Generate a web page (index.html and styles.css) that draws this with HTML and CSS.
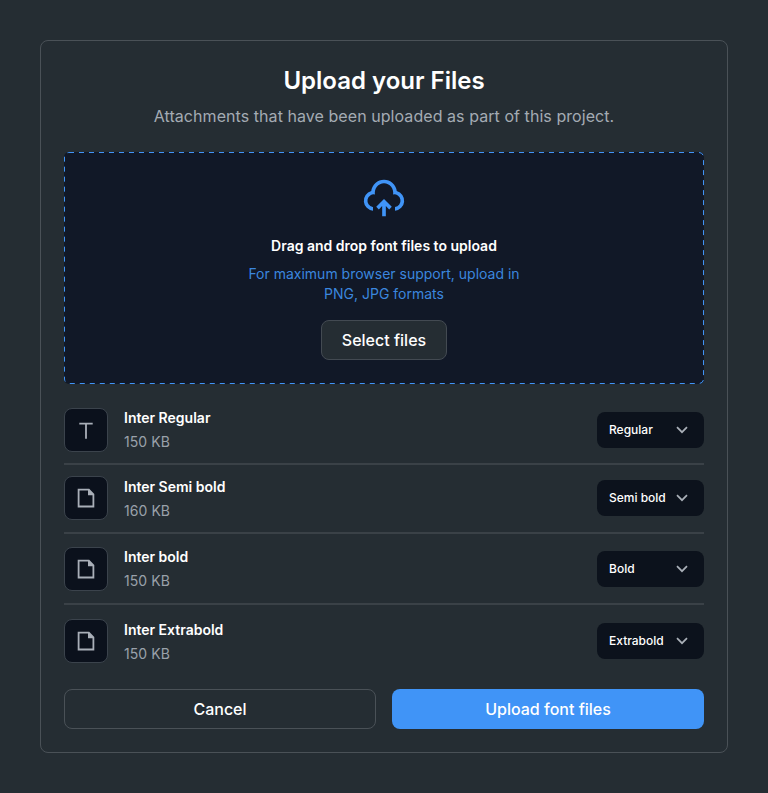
FILE: index.html
```html
<!DOCTYPE html>
<html lang="en">
<head>
<meta charset="utf-8">
<title>Upload your Files</title>
<link rel="stylesheet" href="styles.css">
</head>
<body>
<main class="card">
  <h1 class="title">Upload your Files</h1>
  <p class="subtitle">Attachments that have been uploaded as part of this project.</p>

  <section class="dropzone">
    <svg class="dropzone-outline" viewBox="0 0 640 232" aria-hidden="true"><rect x="0.5" y="0.5" width="639" height="231" rx="4.5"/></svg>
    <svg class="cloud" viewBox="0 0 24 24" aria-hidden="true"><path d="M12 12.586l4.243 4.242-1.415 1.415L13 16.415V22h-2v-5.587l-1.828 1.83-1.415-1.415L12 12.586zM12 2a7.001 7.001 0 0 1 6.954 6.194 5.5 5.5 0 0 1-.953 10.784v-2.014a3.5 3.5 0 1 0-1.112-6.91 5 5 0 1 0-9.777 0 3.5 3.5 0 0 0-1.292 6.88l.18.03v2.014a5.5 5.5 0 0 1-.954-10.784A7 7 0 0 1 12 2z"/></svg>
    <h2 class="drop-title">Drag and drop font files to upload</h2>
    <p class="drop-hint">For maximum browser support, upload in<br>PNG, JPG formats</p>
    <button class="btn btn-select">Select files</button>
  </section>

  <ul class="files">
    <li class="file">
      <span class="tile"><svg viewBox="0 0 24 24"><path d="M12.9 6.6v14.1h-1.8V6.6H5.3V4.8h13.4v1.8z"/></svg></span>
      <div class="info"><span class="name">Inter Regular</span><span class="size">150 KB</span></div>
      <button class="select">Regular<svg viewBox="0 0 12 8"><path d="M1 1.2l5 5 5-5"/></svg></button>
    </li>
    <li class="file">
      <span class="tile"><svg viewBox="0 0 24 24"><path d="M3.7 2.8H15.2L20.3 8V21.4H3.7zM5.5 4.6v15h13V9.2H14V4.6z"/></svg></span>
      <div class="info"><span class="name">Inter Semi bold</span><span class="size">160 KB</span></div>
      <button class="select">Semi bold<svg viewBox="0 0 12 8"><path d="M1 1.2l5 5 5-5"/></svg></button>
    </li>
    <li class="file">
      <span class="tile"><svg viewBox="0 0 24 24"><path d="M3.7 2.8H15.2L20.3 8V21.4H3.7zM5.5 4.6v15h13V9.2H14V4.6z"/></svg></span>
      <div class="info"><span class="name">Inter bold</span><span class="size">150 KB</span></div>
      <button class="select">Bold<svg viewBox="0 0 12 8"><path d="M1 1.2l5 5 5-5"/></svg></button>
    </li>
    <li class="file">
      <span class="tile"><svg viewBox="0 0 24 24"><path d="M3.7 2.8H15.2L20.3 8V21.4H3.7zM5.5 4.6v15h13V9.2H14V4.6z"/></svg></span>
      <div class="info"><span class="name">Inter Extrabold</span><span class="size">150 KB</span></div>
      <button class="select">Extrabold<svg viewBox="0 0 12 8"><path d="M1 1.2l5 5 5-5"/></svg></button>
    </li>
  </ul>

  <div class="actions">
    <button class="btn btn-cancel">Cancel</button>
    <button class="btn btn-primary">Upload font files</button>
  </div>
</main>
</body>
</html>
```
FILE: styles.css
```css
* { box-sizing: border-box; margin: 0; padding: 0; }
body {
  background: #252d33;
  font-family: Inter, "Liberation Sans", sans-serif;
  color: #fff;
  padding: 40px;
}
button { font-family: inherit; color: inherit; border: 0; }
.card {
  height: 713px;
  border: 1px solid #4a5157;
  border-radius: 8px;
  padding: 24px 23px 23px;
  display: flex;
  flex-direction: column;
}
.title { font-size: 24px; line-height: 32px; font-weight: 600; text-align: center; }
.subtitle {
  margin-top: 7px;
  font-size: 16px;
  line-height: 24px;
  letter-spacing: 0.06px;
  color: #a4abb3;
  text-align: center;
}
.dropzone {
  position: relative;
  margin-top: 24px;
  height: 232px;
  border-radius: 5px;
  background: #111827;
  display: flex;
  flex-direction: column;
  align-items: center;
  padding-top: 24px;
}
.dropzone-outline { position: absolute; inset: 0; width: 640px; height: 232px; }
.dropzone-outline rect { fill: none; stroke: #4094f7; stroke-width: 1; stroke-dasharray: 5 5; }
.cloud { width: 44px; height: 44px; fill: #4094f7; }
.drop-title { margin-top: 16px; font-size: 14px; line-height: 20px; font-weight: 600; }
.drop-hint { margin-top: 8px; font-size: 14px; line-height: 20px; color: #3b86de; text-align: center; }
.btn { height: 40px; border-radius: 8px; font-size: 16px; line-height: 24px; font-weight: 500; }
.btn-select { margin-top: 16px; width: 126px; background: #252d33; border: 1px solid #434a52; }
.files { list-style: none; margin-top: 24px; }
.file { display: flex; align-items: center; height: 57px; padding-bottom: 11px; border-bottom: 2px solid #3a4147; }
.file + .file { height: 69px; padding-top: 11.4px; padding-bottom: 11.6px; }
.file:nth-child(3) { height: 71px; padding-top: 13px; padding-bottom: 12px; }
.file:last-child { height: 59px; padding-top: 14.4px; padding-bottom: 0.6px; border-bottom: 0; }
.tile {
  width: 44px;
  height: 44px;
  flex: none;
  border-radius: 8px;
  border: 1px solid #3b434c;
  background: #0b111c;
  display: flex;
  align-items: center;
  justify-content: center;
}
.tile svg { width: 24px; height: 24px; fill: #a9afb8; fill-rule: evenodd; }
.info { flex: 1; margin-left: 16px; display: flex; flex-direction: column; gap: 4px; }
.file:nth-child(even) .info { padding-top: 1px; }
.name { font-size: 14px; line-height: 20px; font-weight: 600; }
.size { font-size: 14px; line-height: 20px; letter-spacing: 0.06px; color: #9aa1aa; }
.select {
  width: 107px;
  height: 36px;
  border-radius: 8px;
  background: #0c121c;
  padding: 0 16px 0 12px;
  display: flex;
  align-items: center;
  justify-content: space-between;
  font-size: 12px;
  line-height: 16px;
  font-weight: 500;
}
.select svg { width: 12px; height: 8px; fill: none; stroke: #aab0b8; stroke-width: 1.7; }
.actions { display: grid; grid-template-columns: 1fr 1fr; gap: 16px; margin-top: auto; }
.btn-cancel { background: transparent; border: 1px solid #4a5157; }
.btn-primary { background: #4094f7; }
```
